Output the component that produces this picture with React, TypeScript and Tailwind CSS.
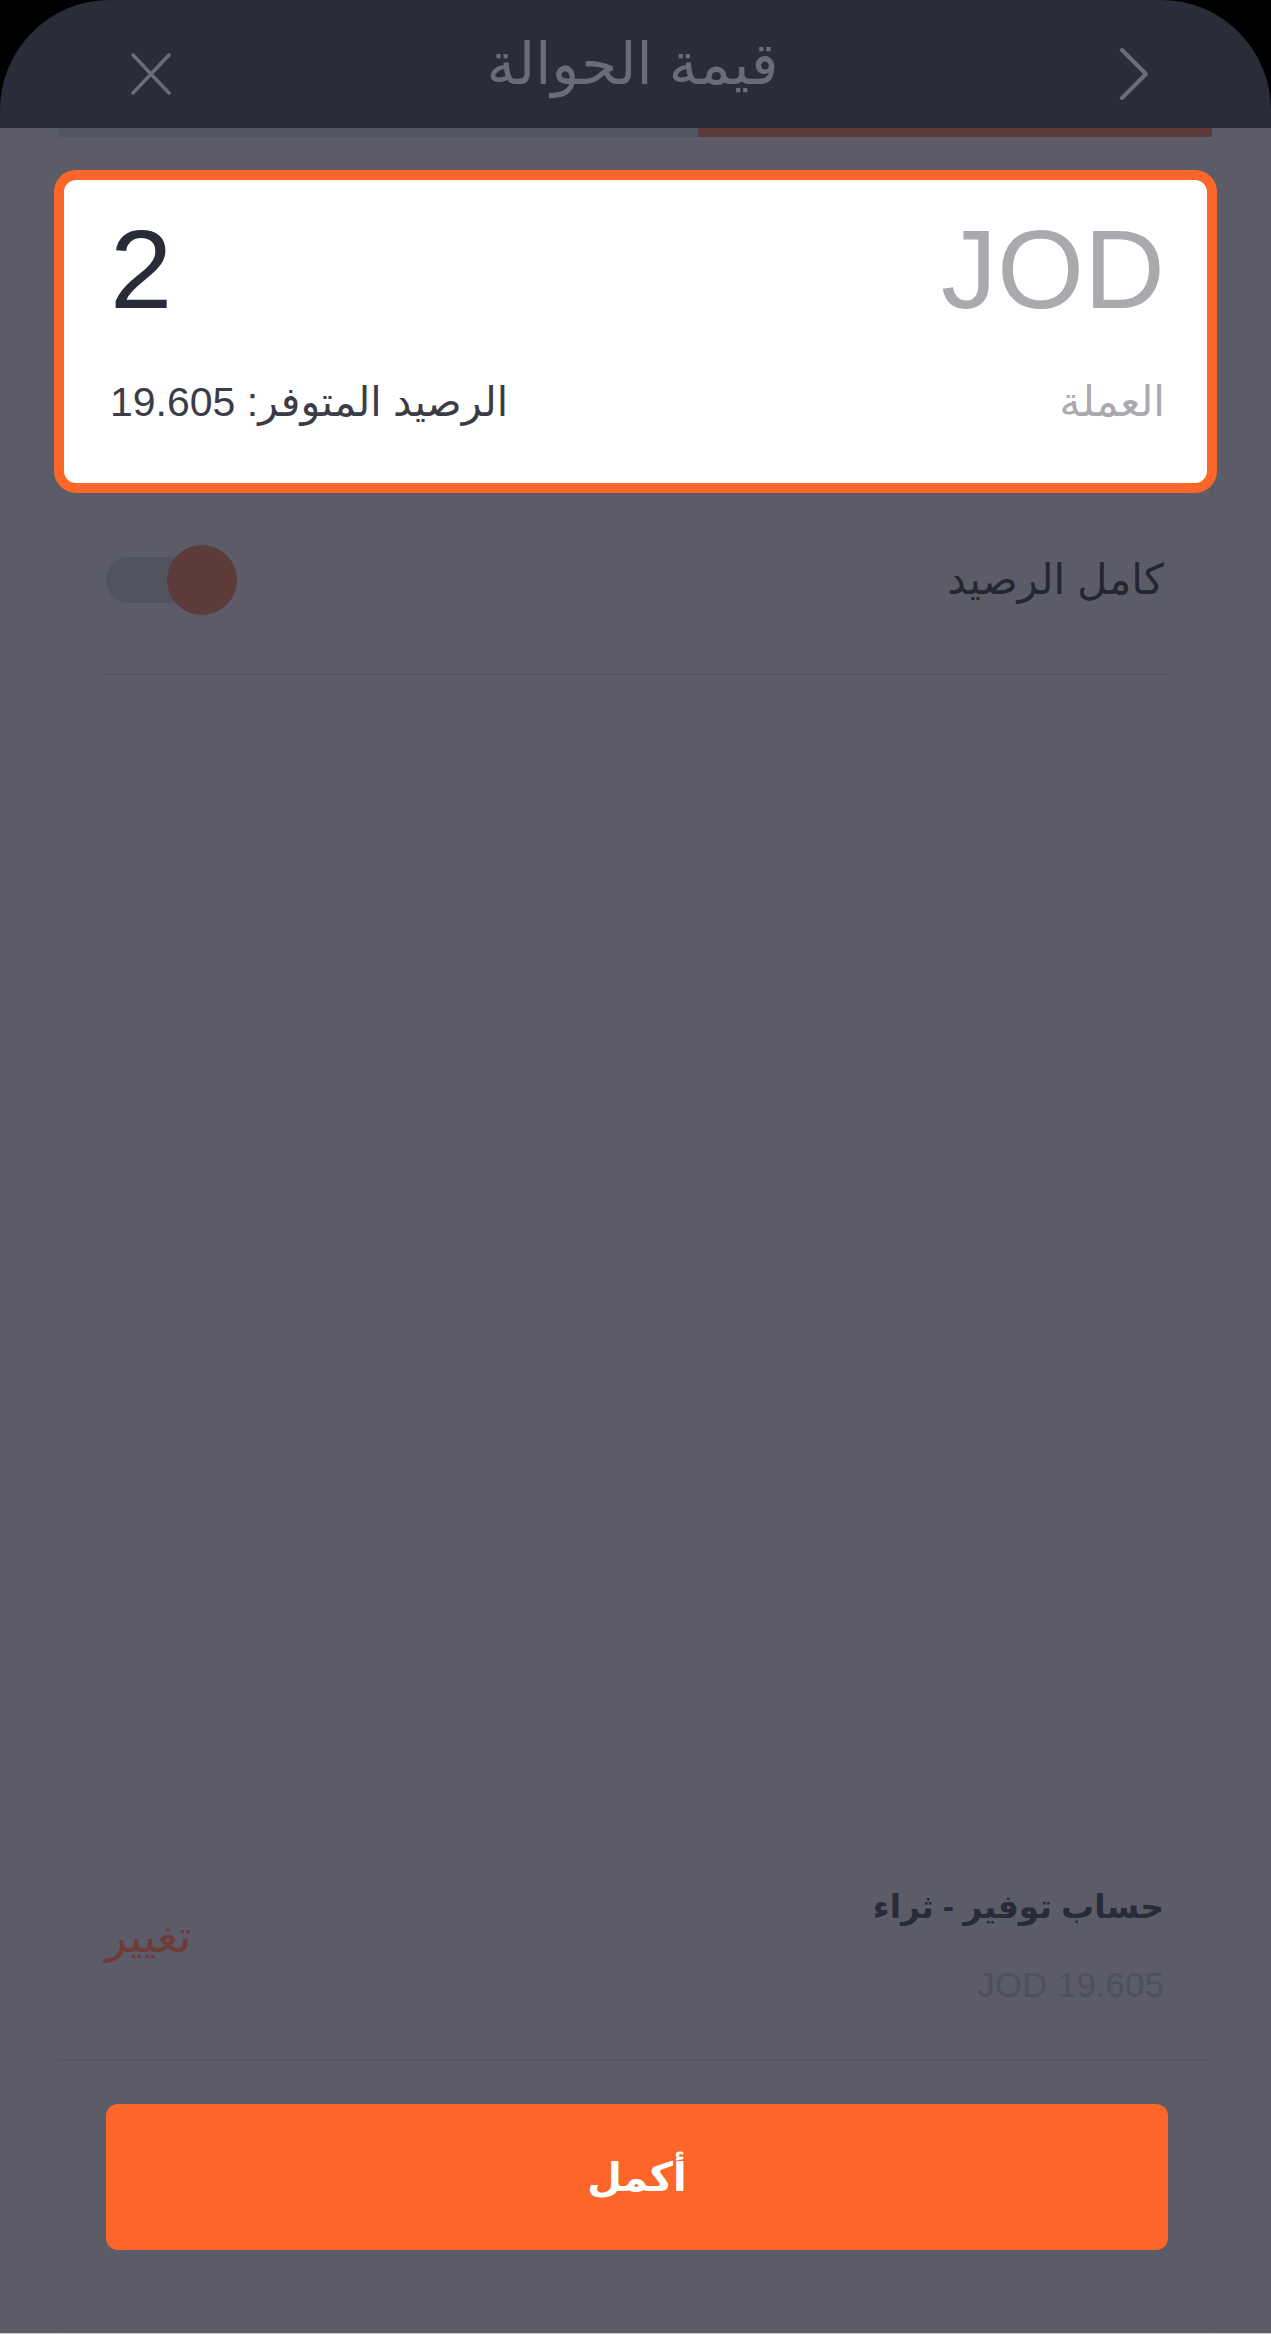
import React from "react";

const font = { fontFamily: '"Liberation Sans", "DejaVu Sans", sans-serif' };

function CloseIcon() {
  return (
    <svg width="40" height="42" viewBox="0 0 40 42" fill="none" stroke="#6b6c78" strokeWidth="3.5" strokeLinecap="round">
      <line x1="2" y1="2" x2="38" y2="40" />
      <line x1="38" y1="2" x2="2" y2="40" />
    </svg>
  );
}

function BackIcon() {
  return (
    <svg width="30" height="54" viewBox="0 0 30 54" fill="none" stroke="#6b6c78" strokeWidth="4" strokeLinecap="round" strokeLinejoin="round">
      <polyline points="3,3 27,27 3,51" />
    </svg>
  );
}

export default function App() {
  return (
    <div style={font} className="w-[1271px] h-[2334px] bg-black flex flex-col overflow-hidden">
      {/* header */}
      <div className="h-[128px] shrink-0 rounded-t-[110px] bg-[#2b2c39] flex items-center pt-[20px] pl-[131px] pr-[122px]">
        <div className="w-[49px] flex">
          <CloseIcon />
        </div>
        <div dir="rtl" className="flex-1 text-center text-[58px] leading-[68px] text-[#6b6c78] mb-[20px]">
          قيمة الحوالة
        </div>
        <div className="w-[64px] flex justify-end">
          <BackIcon />
        </div>
      </div>

      <div className="flex-1 bg-[#5c5c68] flex flex-col">
        <div className="flex-1 mx-[58px] border-x border-[#585965] flex flex-col">
          {/* tabs indicator */}
          <div className="h-[9px] flex">
            <div className="w-[639px] bg-[#535561]" />
            <div className="flex-1 bg-[#5b3a39]" />
          </div>

          {/* amount card */}
          <div className="mt-[33px] -mx-[5px] h-[323px] rounded-[22px] border-[10px] border-[#fc6629] bg-white pl-[46px] pr-[42px] pt-[34px]">
            <div className="flex justify-between items-start">
              <span className="text-[112px] leading-none text-[#2a2b38]">2</span>
              <span className="text-[112px] leading-none text-[#a9a9ae]">JOD</span>
            </div>
            <div className="mt-[52px] flex justify-between items-center">
              <span dir="rtl" className="text-[41px] leading-[48px] text-[#3b3c46]">
                الرصيد المتوفر: 19.605
              </span>
              <span dir="rtl" className="text-[42px] leading-[48px] text-[#a9a9ae]">
                العملة
              </span>
            </div>
          </div>

          {/* full balance toggle */}
          <div className="mt-[52px] h-[70px] flex items-center justify-between pl-[47px] pr-[48px]">
            <div className="relative w-[131px] h-[70px] flex items-center">
              <div className="w-[110px] h-[46px] rounded-full bg-[#51535f]" />
              <div className="absolute left-[61px] top-0 w-[70px] h-[70px] rounded-full bg-[#5e3b3b]" />
            </div>
            <span dir="rtl" className="text-[42px] leading-[52px] text-[#25262f]">
              كامل الرصيد
            </span>
          </div>
          <div className="mt-[58px] ml-[45px] mr-[46px] h-[2px] bg-[#555661]" />

          <div className="flex-1" />

          {/* source account */}
          <div className="flex items-center justify-between pl-[46px] pr-[48px]">
            <span dir="rtl" className="mb-[16px] text-[45px] leading-[56px] text-[#6d3b3a]">
              تغيير
            </span>
            <div className="flex flex-col items-end">
              <span dir="rtl" className="text-[33px] leading-[44px] font-bold text-[#2a2b38]">
                حساب توفير - ثراء
              </span>
              <span dir="rtl" className="mt-[36px] text-[35px] leading-[40px] text-[#4f505b]">
                JOD 19.605
              </span>
            </div>
          </div>
          <div className="mt-[54px] h-[2px] bg-[#565762]" />

          <button className="mt-[43px] ml-[47px] mr-[44px] h-[146px] rounded-[12px] bg-[#fc6629] flex items-center justify-center">
            <span dir="rtl" className="text-[40px] leading-[50px] font-bold text-white">
              أكمل
            </span>
          </button>
          <div className="h-[83px]" />
        </div>
        <div className="h-px bg-[#c9c9cf]" />
      </div>
    </div>
  );
}
